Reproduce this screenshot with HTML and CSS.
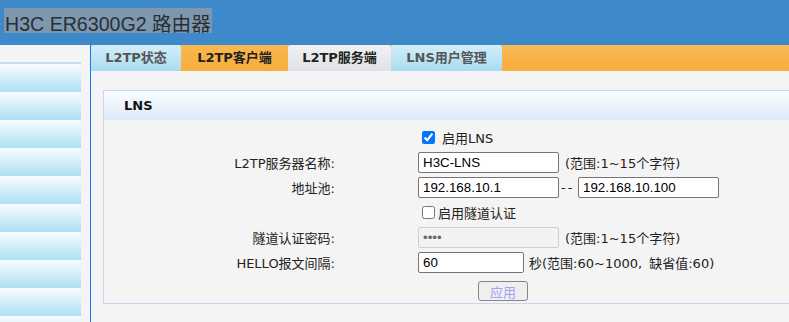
FILE: index.html
```html
<!DOCTYPE html>
<html lang="zh-CN">
<head>
<meta charset="utf-8">
<title>H3C ER6300G2 路由器</title>
<link rel="stylesheet" href="styles.css">
</head>
<body>
<header class="topbar"><span class="brand">H3C ER6300G2 路由器</span></header>
<div class="main">
  <nav class="sidebar">
    <div class="menu">
      <div class="menu-item"></div>
      <div class="menu-item"></div>
      <div class="menu-item"></div>
      <div class="menu-item"></div>
      <div class="menu-item"></div>
      <div class="menu-item"></div>
      <div class="menu-item"></div>
      <div class="menu-item"></div>
      <div class="menu-item"></div>
      <div class="menu-item"></div>
    </div>
  </nav>
  <section class="content">
    <ul class="tabs">
      <li class="tab tab-blue tab-status">L2TP状态</li>
      <li class="tab tab-orange tab-client">L2TP客户端</li>
      <li class="tab tab-active tab-server">L2TP服务端</li>
      <li class="tab tab-blue tab-users">LNS用户管理</li>
    </ul>
    <div class="panel">
      <div class="panel-head">LNS</div>
      <form class="panel-body">
        <div class="row">
          <div class="label"></div>
          <div class="field"><input class="check" type="checkbox" id="lns" checked><label class="check-text spaced" for="lns">启用LNS</label></div>
        </div>
        <div class="row">
          <div class="label">L2TP服务器名称:</div>
          <div class="field"><input class="text" type="text" value="H3C-LNS"><span class="hint">(范围:1~15个字符)</span></div>
        </div>
        <div class="row">
          <div class="label">地址池:</div>
          <div class="field"><input class="text" type="text" value="192.168.10.1"><span class="dash">--</span><input class="text" type="text" value="192.168.10.100"></div>
        </div>
        <div class="row">
          <div class="label"></div>
          <div class="field"><input class="check" type="checkbox" id="tunnel"><label class="check-text" for="tunnel">启用隧道认证</label></div>
        </div>
        <div class="row">
          <div class="label">隧道认证密码:</div>
          <div class="field"><input class="text text-disabled" type="password" value="1234" disabled><span class="hint">(范围:1~15个字符)</span></div>
        </div>
        <div class="row">
          <div class="label">HELLO报文间隔:</div>
          <div class="field"><input class="text text-short" type="text" value="60"><span class="hint">秒(范围:60~1000, 缺省值:60)</span></div>
        </div>
        <div class="row row-button">
          <div class="label"></div>
          <div class="field field-button"><button class="apply" type="button">应用</button></div>
        </div>
      </form>
    </div>
  </section>
</div>
</body>
</html>
```

FILE: styles.css
```css
html, body {
  margin: 0;
  padding: 0;
}

body {
  height: 322px;
  overflow: hidden;
  background: #f4f4f4;
  color: #222;
  font: 13px "DejaVu Sans", "Noto Sans CJK SC", sans-serif;
}

.topbar {
  box-sizing: border-box;
  height: 45px;
  padding: 8px 0 0 4px;
  background: #3e89c9;
}

.brand {
  display: inline-block;
  height: 25px;
  line-height: 25px;
  padding: 0 1px;
  background: #7d97af;
  color: #2a2f35;
  font: 19.6px "Liberation Sans", "Noto Sans CJK SC", sans-serif;
}

.main {
  display: flex;
  height: 277px;
}

.sidebar {
  width: 90px;
  flex: none;
  border-right: 1px solid #1677f5;
  background: #f4f4f4;
  overflow: hidden;
}

.menu {
  width: 81px;
  margin-top: 17px;
  border-top: 2px solid #cadcee;
}

.menu-item {
  height: 28px;
  background: linear-gradient(#fafdff, #ade0f4);
}

.content {
  flex: 1;
  overflow: hidden;
  background: #f4f4f4;
}

.tabs {
  display: flex;
  height: 26px;
  margin: 0;
  padding: 0;
  list-style: none;
  background: linear-gradient(#f9b957, #f8ad3a);
}

.tab {
  height: 26px;
  line-height: 26px;
  text-align: center;
  font-weight: bold;
  font-size: 13px;
  border-radius: 3px 3px 0 0;
}

.tab-status { width: 90px; }
.tab-client { width: 107px; }
.tab-server { width: 103px; }
.tab-users { width: 111px; }

.tab-blue {
  color: #555;
  background: linear-gradient(#d3edf8, #a9dcf1);
}

.tab-orange {
  color: #222;
  background: linear-gradient(#f9b850, #f8ad3a);
}

.tab-active {
  color: #222;
  background: linear-gradient(#f1f1f1, #dee2e6);
}

.panel {
  width: 740px;
  margin: 19px 0 0 12px;
  border: 1px solid #c5d8ee;
}

.panel-head {
  height: 29px;
  line-height: 29px;
  padding-left: 20px;
  font-weight: bold;
  color: #111;
  background: linear-gradient(#fbfdff, #dce8f8);
}

.panel-body {
  margin: 0;
  padding-top: 5px;
}

.row {
  display: flex;
  align-items: center;
  height: 25px;
}

.row-button {
  height: 28px;
  align-items: flex-start;
}

.label {
  width: 231px;
  flex: none;
  text-align: right;
  color: #222;
}

.field {
  display: flex;
  align-items: center;
  margin-left: 83px;
}

.field-button {
  margin-left: 143px;
}

.check {
  width: 13px;
  height: 13px;
  margin: 3px 3px 3px 4px;
}

.check-text {
  color: #222;
}

.check-text.spaced {
  margin-left: 4px;
}

.text {
  box-sizing: border-box;
  width: 141px;
  height: 21px;
  margin: 0;
  padding: 0 4px;
  border: 1px solid #767676;
  border-radius: 2px;
  background: #fff;
  color: #000;
  font: 13.33px "Liberation Sans", sans-serif;
}

.text-short {
  width: 106px;
}

.text-disabled {
  background: #f2f2f2;
  border-color: #cfcfcf;
  color: #666;
}

.dash {
  width: 19px;
  padding-left: 2px;
  box-sizing: border-box;
  letter-spacing: 2px;
  color: #222;
}

.hint {
  margin-left: 6px;
  color: #222;
}

.text-short + .hint {
  margin-left: 5px;
  word-spacing: 3px;
}

.apply {
  box-sizing: border-box;
  width: 50px;
  height: 20px;
  margin-top: 6px;
  padding: 0;
  border: 1px solid #858585;
  border-radius: 3px;
  background: #efefef;
  color: #a79ff3;
  font: 13px "Noto Sans CJK SC", sans-serif;
}
```
